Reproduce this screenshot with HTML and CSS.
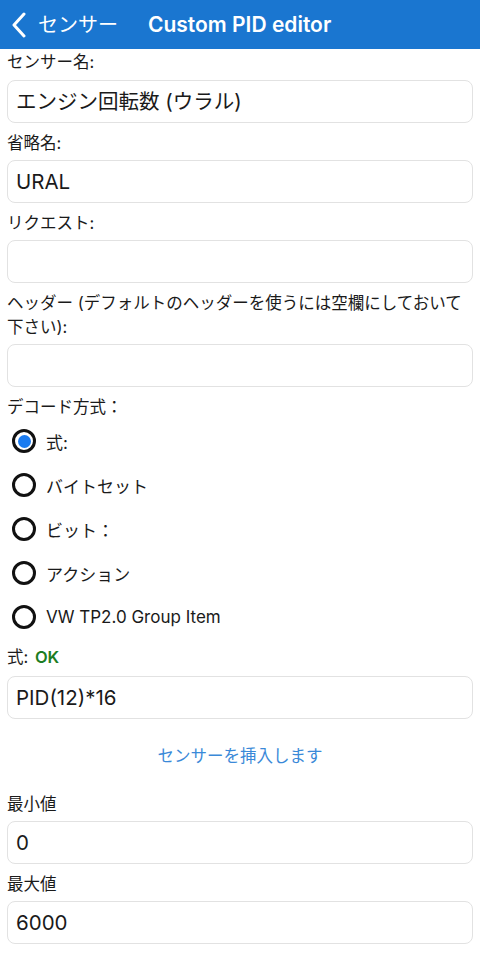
FILE: index.html
```html
<!DOCTYPE html>
<html lang="ja">
<head>
    <meta charset="UTF-8">
    <meta name="viewport" content="width=device-width, initial-scale=1.0">
    <title>Custom PID editor</title>
    <link rel="stylesheet" href="styles.css">
</head>
<body>
    <div class="nav-bar">
        <a class="back" href="#">
            <svg class="chevron" width="16" height="26" viewBox="0 0 16 26">
                <path d="M13 2 L3 13 L13 24" fill="none" stroke="#fff" stroke-width="3" stroke-linecap="round" stroke-linejoin="round"/>
            </svg>
            <span>センサー</span>
        </a>
        <div class="title">Custom PID editor</div>
    </div>

    <div class="form">
        <div class="label first">センサー名:</div>
        <div class="field">エンジン回転数 (ウラル)</div>

        <div class="label">省略名:</div>
        <div class="field">URAL</div>

        <div class="label">リクエスト:</div>
        <div class="field"></div>

        <div class="label two-line">ヘッダー (デフォルトのヘッダーを使うには空欄にしておいて下さい):</div>
        <div class="field"></div>

        <div class="label group">デコード方式：</div>
        <div class="radio-list">
            <div class="radio-row"><span class="radio checked"></span><span>式:</span></div>
            <div class="radio-row"><span class="radio"></span><span>バイトセット</span></div>
            <div class="radio-row"><span class="radio"></span><span>ビット：</span></div>
            <div class="radio-row"><span class="radio"></span><span>アクション</span></div>
            <div class="radio-row"><span class="radio"></span><span>VW TP2.0 Group Item</span></div>
        </div>

        <div class="label status">式: <span class="ok">OK</span></div>
        <div class="field">PID(12)*16</div>

        <a class="insert-link" href="#">センサーを挿入します</a>

        <div class="label">最小値</div>
        <div class="field">0</div>

        <div class="label">最大値</div>
        <div class="field">6000</div>
    </div>
</body>
</html>
```

FILE: styles.css
```css
body {
    margin: 0;
    background: #fff;
    color: #1a1a1a;
    font-family: Inter, "Noto Sans CJK JP", sans-serif;
    height: 953px;
    overflow: hidden;
}
.nav-bar {
    height: 49px;
    background-color: #1a76d0;
    color: #fff;
    display: flex;
    align-items: center;
    padding-left: 11px;
}
.back {
    display: flex;
    align-items: center;
    color: #fff;
    text-decoration: none;
    font-size: 20px;
    gap: 11px;
}
.back span {
    line-height: 24px;
}
.title {
    margin-left: 30px;
    font-size: 21px;
    font-weight: 600;
    line-height: 24px;
}
.form {
    padding: 0 7px;
}
.label {
    font-size: 16.5px;
    line-height: 24px;
    height: 24px;
    padding-top: 8px;
    margin-bottom: 5px;
    white-space: nowrap;
}
.label.first {
    padding-top: 1px;
    margin-bottom: 6px;
}
.label.two-line {
    height: 48px;
    white-space: normal;
}
.label.group {
    margin-bottom: 0;
}
.label.status {
    padding-top: 6px;
    margin-bottom: 7px;
}
.ok {
    color: #1d7d22;
    font-weight: 600;
    margin-left: 2px;
}
.field {
    height: 43px;
    box-sizing: border-box;
    border: 1px solid #e2e2e2;
    border-radius: 8px;
    padding: 0 8px;
    font-size: 20.5px;
    line-height: 41px;
    overflow: hidden;
}
.radio-list {
    display: flex;
    flex-direction: column;
}
.radio-row {
    height: 44px;
    display: flex;
    align-items: center;
    gap: 10px;
    padding-left: 5px;
    font-size: 17px;
}
.radio {
    width: 24px;
    height: 24px;
    box-sizing: border-box;
    border: 3px solid #111;
    border-radius: 50%;
    display: flex;
    align-items: center;
    justify-content: center;
}
.radio.checked::after {
    content: "";
    width: 13px;
    height: 13px;
    border-radius: 50%;
    background: #1a7bf0;
}
.insert-link {
    display: block;
    height: 24px;
    text-align: center;
    color: #3a89d8;
    text-decoration: none;
    font-size: 16.5px;
    line-height: 24px;
    padding-top: 25px;
    margin-bottom: 16px;
}
```
